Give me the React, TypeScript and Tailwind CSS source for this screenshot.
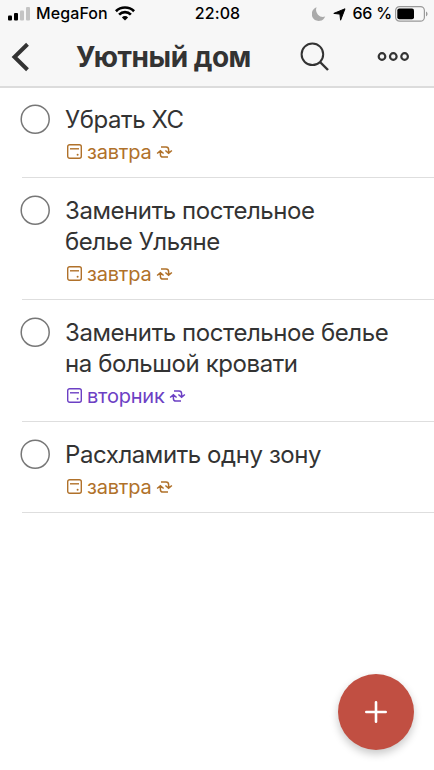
type Task = {
  title: string[];
  due: string;
  color: string;
};

const tasks: Task[] = [
  { title: ["Убрать ХС"], due: "завтра", color: "text-[#b0712a]" },
  { title: ["Заменить постельное", "белье Ульяне"], due: "завтра", color: "text-[#b0712a]" },
  { title: ["Заменить постельное белье", "на большой кровати"], due: "вторник", color: "text-[#6c40c4]" },
  { title: ["Расхламить одну зону"], due: "завтра", color: "text-[#b0712a]" },
];

const StatusBar = () => (
  <div className="grid h-[27px] grid-cols-[1fr_auto_1fr] items-center pl-[7px] pr-[6px] text-[16px] leading-[27px] font-medium text-black">
    <div className="flex items-center">
      <svg className="mt-[1px] ml-px mr-[6px] shrink-0" width="22" height="14" viewBox="0 0 22 14">
        <rect x="0" y="8.5" width="4" height="5" rx="1" fill="#000" />
        <rect x="6" y="6" width="4" height="7.5" rx="1" fill="#000" />
        <rect x="12" y="3.5" width="4" height="10" rx="1" fill="#c4c4c4" />
        <rect x="18" y="0" width="4" height="13.5" rx="1" fill="#c4c4c4" />
      </svg>
      <span className="tracking-[0.1px]">MegaFon</span>
      <svg className="ml-[7px] shrink-0" width="20" height="15" viewBox="0 0 20 15" fill="none" stroke="#000" strokeWidth="2.7">
        <path d="M0.9 5.2a13 13 0 0 1 18.2 0" />
        <path d="M4.1 8.6a8.4 8.4 0 0 1 11.8 0" />
        <path d="M10 14.5l-3.1-3.1a4.4 4.4 0 0 1 6.2 0z" fill="#000" stroke="none" />
      </svg>
    </div>
    <span className="tracking-[0.1px]">22:08</span>
    <div className="flex items-center justify-end">
      <svg className="mr-[7px] shrink-0" width="14" height="14" viewBox="0 0 14 14">
        <path d="M4.6 0.3a7 7 0 1 0 8.6 9.3A7 7 0 0 1 4.6 0.3z" fill="#aaa" />
      </svg>
      <svg className="mt-px mr-[6px] shrink-0" width="13" height="13" viewBox="0 0 13 13">
        <path d="M12 0.8L7.6 12.2L6.9 6.1L0.8 5.4z" fill="#000" stroke="#000" strokeWidth="1" strokeLinejoin="round" />
      </svg>
      <span className="tracking-[-0.2px] whitespace-nowrap">66 %</span>
      <svg className="ml-[3px] shrink-0" width="33" height="16" viewBox="0 0 33 16">
        <rect x="0.6" y="0.6" width="28.8" height="14.6" rx="4" fill="none" stroke="#999" strokeWidth="1.2" />
        <rect x="2.3" y="2.6" width="16.7" height="10.6" rx="2" fill="#000" />
        <path d="M31 5.5c2 .8 2 4 0 4.8z" fill="#999" />
      </svg>
    </div>
  </div>
);

const Header = () => (
  <header className="h-[88px] border-b-2 border-[#dcdcdc] bg-[#f7f7f7]">
    <StatusBar />
    <div className="flex h-[59px] items-center text-[#333]">
      <svg className="ml-[11px] shrink-0" width="20" height="30" viewBox="0 0 20 30" fill="none" stroke="currentColor" strokeWidth="4">
        <path d="M16.5 2.3L3.5 15l13 12.7" />
      </svg>
      <h1 className="ml-[45px] w-[180px] text-[28px] leading-[40px] font-bold tracking-[-0.5px] whitespace-nowrap">Уютный дом</h1>
      <svg className="ml-[44px] shrink-0" width="30" height="30" viewBox="0 0 30 30" fill="none" stroke="currentColor" strokeWidth="2">
        <circle cx="12.4" cy="12.3" r="10.8" />
        <path d="M20 20l8 8" strokeWidth="2.4" />
      </svg>
      <svg className="ml-[47px] shrink-0" width="33" height="10" viewBox="0 0 33 10" fill="none" stroke="currentColor" strokeWidth="2.2">
        <circle cx="5" cy="4.5" r="3.3" />
        <circle cx="16.3" cy="4.5" r="3.3" />
        <circle cx="27.6" cy="4.5" r="3.3" />
      </svg>
    </div>
  </header>
);

const TaskRow = ({ task }: { task: Task }) => (
  <li className="flex pl-[20px]">
    <svg className="mt-[17px] -mr-[30px] size-[30px] shrink-0" viewBox="0 0 30 30" fill="none" stroke="#777" strokeWidth="1.5">
      <circle cx="15.2" cy="15.2" r="14" />
    </svg>
    <div className="ml-[2px] flex-1 border-b border-[#dedede] pt-[17px] pb-[8px] pl-[43px]">
      <p className="text-[24px] leading-[31px] tracking-[-0.42px] text-[#333]">
        {task.title.map((line) => (
          <span key={line} className="block whitespace-nowrap">{line}</span>
        ))}
      </p>
      <div className={`flex h-[34px] items-center text-[20px] leading-[34px] tracking-[-0.2px] ${task.color}`}>
        <svg className="-mt-px ml-[2px] mr-[5px] shrink-0" width="15" height="15" viewBox="0 0 15 15" fill="none" stroke="currentColor" strokeWidth="1.4">
          <rect x="0.7" y="0.7" width="13.6" height="13.6" rx="2" />
          <path d="M3 4.8h9" />
          <circle cx="10.6" cy="10.8" r="1" fill="currentColor" stroke="none" />
        </svg>
        <span>{task.due}</span>
        <svg className="ml-[4px] shrink-0" width="17" height="12" viewBox="0 0 16 12" fill="none" stroke="currentColor" strokeWidth="1.5">
          <path d="M4.5 0.9h5a2.6 2.6 0 0 1 2.6 2.6v3.6M8.9 4.5l3.2 2.7 3.3-2.7" />
          <path d="M11.5 11.1h-5a2.6 2.6 0 0 1-2.6-2.6V4.9M7.1 7.5L3.9 4.8 0.6 7.5" />
        </svg>
      </div>
    </div>
  </li>
);

const App = () => (
  <div className="relative h-[770px] w-[434px] overflow-hidden bg-white font-['Inter',sans-serif]">
    <Header />
    <ul className="-mt-px">
      {tasks.map((task) => (
        <TaskRow key={task.title[0]} task={task} />
      ))}
    </ul>
    <button
      aria-label="Добавить задачу"
      className="absolute right-[20px] bottom-[20px] flex size-[76px] items-center justify-center rounded-full bg-[#c14f42] shadow-[0_4px_9px_rgba(0,0,0,0.22)]"
    >
      <svg width="22" height="22" viewBox="0 0 22 22" stroke="#fff" strokeWidth="2.6" strokeLinecap="round">
        <path d="M11 1.3v19.4M1.3 11h19.4" />
      </svg>
    </button>
  </div>
);

export default App;
